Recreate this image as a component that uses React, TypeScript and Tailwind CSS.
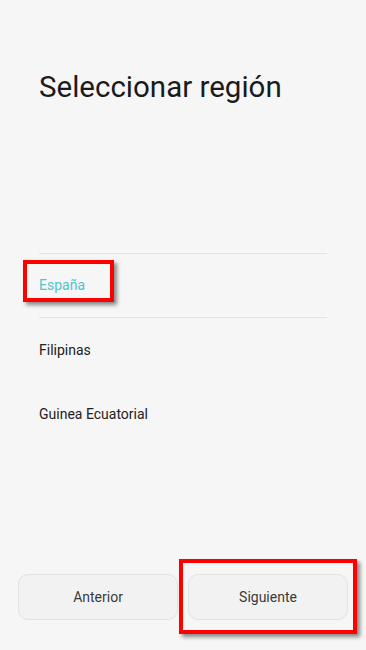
import React from "react";

const regions = ["España", "Filipinas", "Guinea Ecuatorial"];

export default function App() {
	const selected = "España";

	return (
		<div
			className="relative flex h-[650px] w-full flex-col bg-[#f6f6f6]"
			style={{ fontFamily: "Roboto, 'Noto Sans', sans-serif" }}
		>
			<h1 className="px-[39px] pt-[69px] text-[29.5px] leading-[36px] font-normal text-[#1b1b1b]">
				Seleccionar región
			</h1>

			<div className="mx-[39px] mt-[148px] border-t border-[#e4e4e4]">
				{regions.map((r, i) => (
					<div
						key={r}
						className={
							"flex h-[64px] items-center text-[14px] " +
							(i === 0 ? "border-b border-[#e4e4e4] " : "") +
							(r === selected ? "text-[#4dc4cf]" : "text-[#222]")
						}
					>
						{r}
					</div>
				))}
			</div>

			<div className="mt-auto flex gap-[10px] px-[18px] pb-[30px]">
				<button className="h-[46px] flex-1 rounded-[10px] border border-[#e2e2e2] bg-[#f2f2f2] text-[14px] text-[#3a3a3a]">
					Anterior
				</button>
				<button className="h-[46px] flex-1 rounded-[10px] border border-[#e2e2e2] bg-[#f2f2f2] text-[14px] text-[#3a3a3a]">
					Siguiente
				</button>
			</div>

			{/* annotation boxes */}
			<div className="pointer-events-none absolute left-[23px] top-[260px] h-[42px] w-[91px] border-[4px] border-[#ff0000] shadow-[3px_3px_4px_rgba(0,0,0,0.45)]" />
			<div className="pointer-events-none absolute left-[179px] top-[559px] h-[75px] w-[178px] border-[4px] border-[#ff0000] shadow-[3px_3px_4px_rgba(0,0,0,0.45)]" />
		</div>
	);
}
